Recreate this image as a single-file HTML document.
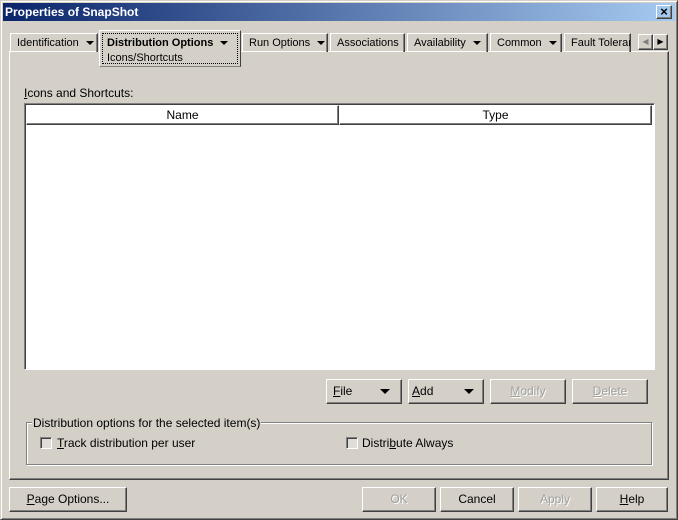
<!DOCTYPE html>
<html><head><style>
*{margin:0;padding:0;box-sizing:border-box}
body{width:678px;height:520px;background:#d4d0c8;font:12px "Liberation Sans",sans-serif;color:#000;position:relative;overflow:hidden}
.a{position:absolute;white-space:nowrap}
.win{left:0;top:0;width:678px;height:520px;border:1px solid;border-color:#d4d0c8 #404040 #404040 #d4d0c8;box-shadow:inset 1px 1px #fff,inset -1px -1px #808080}
.title{left:3px;top:3px;width:672px;height:18px;background:linear-gradient(90deg,#0a246a,#a6caf0);color:#fff;font-weight:bold;font-size:12px;line-height:18px;padding-left:2px}
.btn{border:1px solid;border-color:#fff #404040 #404040 #fff;box-shadow:inset -1px -1px #808080;text-align:center;line-height:22px;height:25px}
.dis{color:#a0a0a0;text-shadow:1px 1px #fff}
.tab{top:33px;height:19px;border:1px solid;border-color:#fff #404040 transparent #fff;border-bottom:none;line-height:19px;padding-left:6px;box-shadow:inset -1px 0 #808080;font-size:11px;overflow:hidden}
.tri{display:inline-block;width:0;height:0;border-left:4px solid transparent;border-right:4px solid transparent;border-top:4px solid #000;vertical-align:middle;margin-left:7px}
u{text-decoration:underline}
.cb{width:12px;height:12px;border:1px solid;border-color:#808080 #fff #fff #808080;box-shadow:inset 1px 1px #404040;background:#e0ddd8}
</style></head><body>
<div class="a win"></div>
<div class="a title">Properties of SnapShot</div>
<div class="a btn" style="left:656px;top:5px;width:16px;height:14px;line-height:11px;font-size:13px;font-weight:bold">×</div>

<div class="a" style="left:9px;top:51px;width:660px;height:429px;border:1px solid;border-color:#fff #404040 #404040 #fff;box-shadow:inset -1px -1px #808080"></div>
<div class="a tab" style="left:10px;width:88px">Identification<span class="tri"></span></div>
<div class="a tab" style="left:242px;width:86px">Run Options<span class="tri"></span></div>
<div class="a tab" style="left:330px;width:75px">Associations</div>
<div class="a tab" style="left:407px;width:81px">Availability<span class="tri"></span></div>
<div class="a tab" style="left:490px;width:72px">Common<span class="tri"></span></div>
<div class="a tab" style="left:564px;width:67px">Fault Toleran</div>
<div class="a" style="left:99px;top:30px;width:142px;height:37px;background:#d4d0c8;border:1px solid;border-color:#fff #404040 #808080 #fff"></div>
<div class="a" style="left:102px;top:33px;width:136px;height:31px;border:1px dotted #000"></div>
<div class="a" style="left:107px;top:37px;font-weight:bold;font-size:11px">Distribution Options<span class="tri"></span></div>
<div class="a" style="left:107px;top:52px;font-size:11px">Icons/Shortcuts</div>
<div class="a btn" style="left:638px;top:34px;width:15px;height:16px;line-height:13px;font-size:8px;color:#808080">◀</div>
<div class="a btn" style="left:653px;top:34px;width:15px;height:16px;line-height:13px;font-size:8px">▶</div>

<div class="a" style="left:24px;top:86px"><u>I</u>cons and Shortcuts:</div>
<div class="a" style="left:24px;top:103px;width:631px;height:267px;background:#fff;border:1px solid;border-color:#808080 #fff #fff #808080;box-shadow:inset 1px 1px #404040"></div>
<div class="a btn" style="left:26px;top:105px;width:313px;height:20px;line-height:19px">Name</div>
<div class="a btn" style="left:339px;top:105px;width:313px;height:20px;line-height:19px">Type</div>

<div class="a btn" style="left:326px;top:379px;width:76px;text-align:left;padding-left:6px"><u>F</u>ile<span class="tri" style="margin-left:28px;border-width:5px 5px 0"></span></div>
<div class="a btn" style="left:408px;top:379px;width:76px;text-align:left;padding-left:3px"><u>A</u>dd<span class="tri" style="margin-left:31px;border-width:5px 5px 0"></span></div>
<div class="a btn dis" style="left:490px;top:379px;width:76px"><u>M</u>odify</div>
<div class="a btn dis" style="left:572px;top:379px;width:76px"><u>D</u>elete</div>

<div class="a" style="left:26px;top:422px;width:626px;height:43px;border:1px solid #808080;box-shadow:1px 1px #fff,inset 1px 1px #fff"></div>
<div class="a" style="left:32px;top:416px;background:#d4d0c8;padding:0 1px">Distribution options for the selected item(s)</div>
<div class="a cb" style="left:40px;top:437px"></div>
<div class="a" style="left:57px;top:436px"><u>T</u>rack distribution per user</div>
<div class="a cb" style="left:346px;top:437px"></div>
<div class="a" style="left:362px;top:436px">Distri<u>b</u>ute Always</div>

<div class="a btn" style="left:9px;top:487px;width:118px"><u>P</u>age Options...</div>
<div class="a btn dis" style="left:362px;top:487px;width:74px">OK</div>
<div class="a btn" style="left:440px;top:487px;width:74px">Cancel</div>
<div class="a btn dis" style="left:518px;top:487px;width:74px">Apply</div>
<div class="a btn" style="left:596px;top:487px;width:72px"><u>H</u>elp</div>
</body></html>
